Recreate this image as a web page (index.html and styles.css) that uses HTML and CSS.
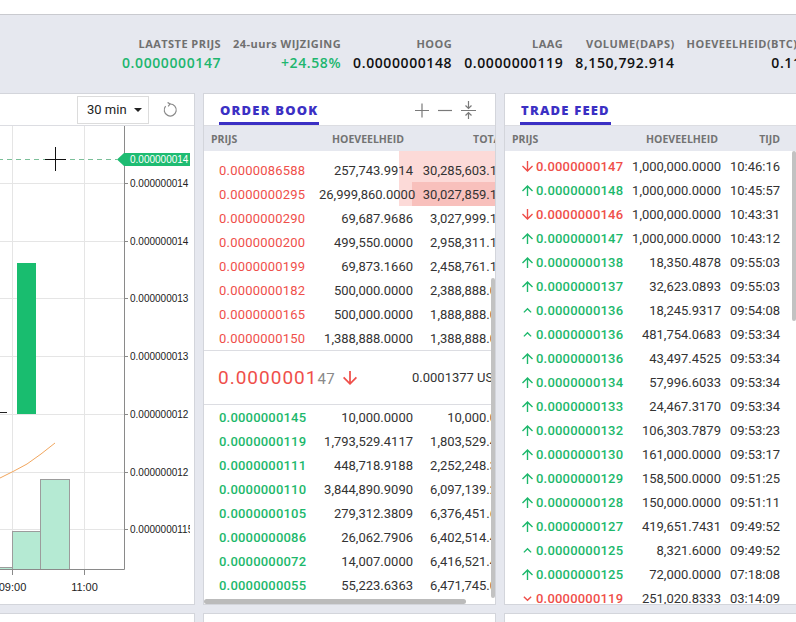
FILE: index.html
```html
<!DOCTYPE html>
<html>
<head>
   <meta charset="utf-8">
   <title>DAPS / BTC</title>
   <link rel="stylesheet" href="styles.css">
</head>
<body>
<div class="topbar"></div>

<!-- market stats -->
<div class="ticker">
   <div class="stat">
      <div class="stat-label">LAATSTE PRIJS</div>
      <div class="stat-value up">0.0000000147</div>
   </div>
   <div class="stat">
      <div class="stat-label">24-uurs WIJZIGING</div>
      <div class="stat-value up">+24.58%</div>
   </div>
   <div class="stat">
      <div class="stat-label">HOOG</div>
      <div class="stat-value">0.0000000148</div>
   </div>
   <div class="stat">
      <div class="stat-label">LAAG</div>
      <div class="stat-value">0.0000000119</div>
   </div>
   <div class="stat">
      <div class="stat-label">VOLUME(DAPS)</div>
      <div class="stat-value">8,150,792.914</div>
   </div>
   <div class="stat">
      <div class="stat-label">HOEVEELHEID(BTC)</div>
      <div class="stat-value">0.11002</div>
   </div>
</div>

<div class="panels">

   <!-- chart -->
   <section class="panel chart-panel">
      <div class="chart-toolbar">
         <div class="interval">30 min <span class="caret"></span></div>
         <svg width="16" height="16" viewBox="0 0 16 16" fill="none" stroke="#8a8a8a" stroke-width="1.2">
            <path d="M3.6 4.2 A6 6 0 1 0 8 2"/>
            <path d="M5.6 0.4 L8 2 L6.2 4.3"/>
         </svg>
      </div>
      <svg class="chart" width="205" height="478" viewBox="-11 126 205 478" font-family="Liberation Sans, Arial, sans-serif">
         <defs>
            <clipPath id="axisClip"><rect x="-11" y="126" width="201" height="478"/></clipPath>
         </defs>
         <g stroke="#e5e5e5" fill="none">
            <path d="M-11 183.5H124M-11 241.5H124M-11 298.5H124M-11 356.5H124M-11 414.5H124M-11 472.5H124M-11 529.5H124"/>
            <path d="M12.5 126V569M84.5 126V569"/>
         </g>
         <!-- volume -->
         <g fill="#b5ead3" stroke="#9c9c9c">
            <rect x="-12" y="567.5" width="24.5" height="2"/>
            <rect x="12.5" y="531.5" width="28" height="38"/>
            <rect x="40.5" y="479.5" width="29" height="90"/>
         </g>
         <!-- candles -->
         <rect x="17" y="263" width="19" height="151" fill="#19bd6f"/>
         <path d="M-11 412.5H7" stroke="#222"/>
         <polyline points="-11,484 0,478 14,471 27,464 41,454 55,443" fill="none" stroke="#f1a65e"/>
         <!-- axes -->
         <g stroke="#8a8a8a" fill="none">
            <path d="M124.5 126V569.5M-11 569.5H124.5"/>
            <path d="M124 183.5h4M124 241.5h4M124 298.5h4M124 356.5h4M124 414.5h4M124 472.5h4M124 529.5h4"/>
            <path d="M12.5 570v5M84.5 570v5"/>
         </g>
         <g font-size="10" fill="#222" clip-path="url(#axisClip)">
            <text x="130" y="187">0.000000014</text>
            <text x="130" y="245">0.000000014</text>
            <text x="130" y="302">0.000000013</text>
            <text x="130" y="360">0.000000013</text>
            <text x="130" y="418">0.000000012</text>
            <text x="130" y="476">0.000000012</text>
            <text x="130" y="533">0.0000000115</text>
         </g>
         <g font-size="11" fill="#222" text-anchor="middle">
            <text x="12.5" y="591">09:00</text>
            <text x="84.5" y="591">11:00</text>
         </g>
         <!-- last price marker -->
         <path d="M-11 159.5H117" stroke="#7bbf99" stroke-dasharray="5 4"/>
         <path d="M117 159.5L124 153H190V166H124Z" fill="#1ebc72"/>
         <text x="130" y="163" font-size="10" fill="#fff">0.000000014</text>
         <path d="M45 159.5H66M55.5 147V171" stroke="#111"/>
      </svg>
   </section>

   <!-- order book -->
   <section class="panel book">
      <div class="panel-head">
         <div class="tab">ORDER BOOK</div>
         <div class="tools">
            <svg width="14" height="16" viewBox="0 0 14 16" stroke="#7a7a7a" stroke-width="1.2"><path d="M0 8.5H14M7 1.5V15.5"/></svg>
            <svg width="14" height="16" viewBox="0 0 14 16" stroke="#7a7a7a" stroke-width="1.2"><path d="M0 8.5H14"/></svg>
            <svg width="15" height="18" viewBox="0 0 15 18" fill="none" stroke="#7a7a7a" stroke-width="1.2"><path d="M0 9.5H15M7.5 0V7M4.5 4.5l3 3 3-3M7.5 18V12M4.5 14.5l3-3 3 3"/></svg>
         </div>
      </div>
      <div class="cols book-cols">
         <span class="c-price">PRIJS</span>
         <span class="c-amount">HOEVEELHEID</span>
         <span class="c-total">TOTAAL</span>
      </div>
      <div class="asks">
         <div class="book-spacer"></div>
         <div class="book-row depth-1"><span class="price down">0.0000086588</span><span class="amount">257,743.9914</span><span class="total">30,285,603.1260</span></div>
         <div class="book-row depth-2"><span class="price down">0.0000000295</span><span class="amount">26,999,860.0000</span><span class="total">30,027,859.1346</span></div>
         <div class="book-row"><span class="price down">0.0000000290</span><span class="amount">69,687.9686</span><span class="total">3,027,999.1346</span></div>
         <div class="book-row"><span class="price down">0.0000000200</span><span class="amount">499,550.0000</span><span class="total">2,958,311.1660</span></div>
         <div class="book-row"><span class="price down">0.0000000199</span><span class="amount">69,873.1660</span><span class="total">2,458,761.1660</span></div>
         <div class="book-row"><span class="price down">0.0000000182</span><span class="amount">500,000.0000</span><span class="total">2,388,888.0000</span></div>
         <div class="book-row"><span class="price down">0.0000000165</span><span class="amount">500,000.0000</span><span class="total">1,888,888.0000</span></div>
         <div class="book-row"><span class="price down">0.0000000150</span><span class="amount">1,388,888.0000</span><span class="total">1,388,888.0000</span></div>
      </div>
      <div class="book-mid">
         <div class="mid-left">
            <span class="last">0.0000001<small>47</small></span>
            <svg class="mid-arrow" width="14" height="14" viewBox="4 4 16 16" fill="#ef4f4a"><path d="M20 12l-1.41-1.41L13 16.17V4h-2v12.17l-5.58-5.59L4 12l8 8 8-8z"/></svg>
         </div>
         <span class="usd">0.0001377 USD</span>
      </div>
      <div class="bids">
         <div class="book-row"><span class="price up">0.0000000145</span><span class="amount">10,000.0000</span><span class="total">10,000.0000</span></div>
         <div class="book-row"><span class="price up">0.0000000119</span><span class="amount">1,793,529.4117</span><span class="total">1,803,529.4117</span></div>
         <div class="book-row"><span class="price up">0.0000000111</span><span class="amount">448,718.9188</span><span class="total">2,252,248.3305</span></div>
         <div class="book-row"><span class="price up">0.0000000110</span><span class="amount">3,844,890.9090</span><span class="total">6,097,139.2395</span></div>
         <div class="book-row"><span class="price up">0.0000000105</span><span class="amount">279,312.3809</span><span class="total">6,376,451.6204</span></div>
         <div class="book-row"><span class="price up">0.0000000086</span><span class="amount">26,062.7906</span><span class="total">6,402,514.4110</span></div>
         <div class="book-row"><span class="price up">0.0000000072</span><span class="amount">14,007.0000</span><span class="total">6,416,521.4110</span></div>
         <div class="book-row"><span class="price up">0.0000000055</span><span class="amount">55,223.6363</span><span class="total">6,471,745.0473</span></div>
      </div>
      <div class="vscroll"></div>
      <div class="hscroll"></div>
   </section>

   <!-- trade feed -->
   <section class="panel feed">
      <div class="panel-head">
         <div class="tab">TRADE FEED</div>
      </div>
      <div class="cols feed-cols">
         <span class="c-price">PRIJS</span>
         <span class="c-amount">HOEVEELHEID</span>
         <span class="c-time">TIJD</span>
      </div>
      <div class="feed-list">
         <div class="feed-row"><span class="dir"><svg width="11" height="11" viewBox="4 4 16 16" fill="#ef4f4a"><path d="M20 12l-1.41-1.41L13 16.17V4h-2v12.17l-5.58-5.59L4 12l8 8 8-8z"/></svg></span><span class="price down">0.0000000147</span><span class="amount">1,000,000.0000</span><span class="time">10:46:16</span></div>
         <div class="feed-row"><span class="dir"><svg width="11" height="11" viewBox="4 4 16 16" fill="#1db86c"><path d="M4 12l1.41 1.41L11 7.83V20h2V7.83l5.58 5.59L20 12l-8-8-8 8z"/></svg></span><span class="price up">0.0000000148</span><span class="amount">1,000,000.0000</span><span class="time">10:45:57</span></div>
         <div class="feed-row"><span class="dir"><svg width="11" height="11" viewBox="4 4 16 16" fill="#ef4f4a"><path d="M20 12l-1.41-1.41L13 16.17V4h-2v12.17l-5.58-5.59L4 12l8 8 8-8z"/></svg></span><span class="price down">0.0000000146</span><span class="amount">1,000,000.0000</span><span class="time">10:43:31</span></div>
         <div class="feed-row"><span class="dir"><svg width="11" height="11" viewBox="4 4 16 16" fill="#1db86c"><path d="M4 12l1.41 1.41L11 7.83V20h2V7.83l5.58 5.59L20 12l-8-8-8 8z"/></svg></span><span class="price up">0.0000000147</span><span class="amount">1,000,000.0000</span><span class="time">10:43:12</span></div>
         <div class="feed-row"><span class="dir"><svg width="11" height="11" viewBox="4 4 16 16" fill="#1db86c"><path d="M4 12l1.41 1.41L11 7.83V20h2V7.83l5.58 5.59L20 12l-8-8-8 8z"/></svg></span><span class="price up">0.0000000138</span><span class="amount">18,350.4878</span><span class="time">09:55:03</span></div>
         <div class="feed-row"><span class="dir"><svg width="11" height="11" viewBox="4 4 16 16" fill="#1db86c"><path d="M4 12l1.41 1.41L11 7.83V20h2V7.83l5.58 5.59L20 12l-8-8-8 8z"/></svg></span><span class="price up">0.0000000137</span><span class="amount">32,623.0893</span><span class="time">09:55:03</span></div>
         <div class="feed-row"><span class="dir"><svg width="11" height="11" viewBox="4 4 16 16" fill="#1db86c"><path d="M12 8l-6 6 1.41 1.41L12 10.83l4.59 4.58L18 14z"/></svg></span><span class="price up">0.0000000136</span><span class="amount">18,245.9317</span><span class="time">09:54:08</span></div>
         <div class="feed-row"><span class="dir"><svg width="11" height="11" viewBox="4 4 16 16" fill="#1db86c"><path d="M12 8l-6 6 1.41 1.41L12 10.83l4.59 4.58L18 14z"/></svg></span><span class="price up">0.0000000136</span><span class="amount">481,754.0683</span><span class="time">09:53:34</span></div>
         <div class="feed-row"><span class="dir"><svg width="11" height="11" viewBox="4 4 16 16" fill="#1db86c"><path d="M4 12l1.41 1.41L11 7.83V20h2V7.83l5.58 5.59L20 12l-8-8-8 8z"/></svg></span><span class="price up">0.0000000136</span><span class="amount">43,497.4525</span><span class="time">09:53:34</span></div>
         <div class="feed-row"><span class="dir"><svg width="11" height="11" viewBox="4 4 16 16" fill="#1db86c"><path d="M4 12l1.41 1.41L11 7.83V20h2V7.83l5.58 5.59L20 12l-8-8-8 8z"/></svg></span><span class="price up">0.0000000134</span><span class="amount">57,996.6033</span><span class="time">09:53:34</span></div>
         <div class="feed-row"><span class="dir"><svg width="11" height="11" viewBox="4 4 16 16" fill="#1db86c"><path d="M4 12l1.41 1.41L11 7.83V20h2V7.83l5.58 5.59L20 12l-8-8-8 8z"/></svg></span><span class="price up">0.0000000133</span><span class="amount">24,467.3170</span><span class="time">09:53:34</span></div>
         <div class="feed-row"><span class="dir"><svg width="11" height="11" viewBox="4 4 16 16" fill="#1db86c"><path d="M4 12l1.41 1.41L11 7.83V20h2V7.83l5.58 5.59L20 12l-8-8-8 8z"/></svg></span><span class="price up">0.0000000132</span><span class="amount">106,303.7879</span><span class="time">09:53:23</span></div>
         <div class="feed-row"><span class="dir"><svg width="11" height="11" viewBox="4 4 16 16" fill="#1db86c"><path d="M4 12l1.41 1.41L11 7.83V20h2V7.83l5.58 5.59L20 12l-8-8-8 8z"/></svg></span><span class="price up">0.0000000130</span><span class="amount">161,000.0000</span><span class="time">09:53:17</span></div>
         <div class="feed-row"><span class="dir"><svg width="11" height="11" viewBox="4 4 16 16" fill="#1db86c"><path d="M4 12l1.41 1.41L11 7.83V20h2V7.83l5.58 5.59L20 12l-8-8-8 8z"/></svg></span><span class="price up">0.0000000129</span><span class="amount">158,500.0000</span><span class="time">09:51:25</span></div>
         <div class="feed-row"><span class="dir"><svg width="11" height="11" viewBox="4 4 16 16" fill="#1db86c"><path d="M4 12l1.41 1.41L11 7.83V20h2V7.83l5.58 5.59L20 12l-8-8-8 8z"/></svg></span><span class="price up">0.0000000128</span><span class="amount">150,000.0000</span><span class="time">09:51:11</span></div>
         <div class="feed-row"><span class="dir"><svg width="11" height="11" viewBox="4 4 16 16" fill="#1db86c"><path d="M4 12l1.41 1.41L11 7.83V20h2V7.83l5.58 5.59L20 12l-8-8-8 8z"/></svg></span><span class="price up">0.0000000127</span><span class="amount">419,651.7431</span><span class="time">09:49:52</span></div>
         <div class="feed-row"><span class="dir"><svg width="11" height="11" viewBox="4 4 16 16" fill="#1db86c"><path d="M12 8l-6 6 1.41 1.41L12 10.83l4.59 4.58L18 14z"/></svg></span><span class="price up">0.0000000125</span><span class="amount">8,321.6000</span><span class="time">09:49:52</span></div>
         <div class="feed-row"><span class="dir"><svg width="11" height="11" viewBox="4 4 16 16" fill="#1db86c"><path d="M4 12l1.41 1.41L11 7.83V20h2V7.83l5.58 5.59L20 12l-8-8-8 8z"/></svg></span><span class="price up">0.0000000125</span><span class="amount">72,000.0000</span><span class="time">07:18:08</span></div>
         <div class="feed-row"><span class="dir"><svg width="11" height="11" viewBox="4 4 16 16" fill="#ef4f4a"><path d="M16.59 8.59L12 13.17 7.41 8.59 6 10l6 6 6-6z"/></svg></span><span class="price down">0.0000000119</span><span class="amount">251,020.8333</span><span class="time">03:14:09</span></div>
      </div>
      <div class="vscroll"></div>
   </section>
</div>

<div class="panels lower">
   <section class="panel chart-panel"></section>
   <section class="panel"></section>
   <section class="panel"></section>
</div>
</body>
</html>
```

FILE: styles.css
```css
* {
   box-sizing: border-box;
}
html, body {
   margin: 0;
   padding: 0;
}
body {
   width: 796px;
   height: 622px;
   overflow: hidden;
   background-color: #e6e8ef;
   font-family: "Open Sans", Arial, sans-serif;
   color: #222;
}

/* white strip above the ticker */
.topbar {
   height: 15px;
   background-color: #fff;
   border-bottom: 1px solid #c9cacf;
}

/* market stats */
.ticker {
   display: flex;
   gap: 12px;
   height: 78px;
   padding: 22px 0 0 122px;
   white-space: nowrap;
}
.stat {
   text-align: right;
}
.stat-label {
   font-size: 11px;
   font-weight: 700;
   line-height: 14px;
   letter-spacing: 0.45px;
   color: #707070;
}
.stat-value {
   margin-top: 2px;
   font-size: 14px;
   font-weight: 600;
   line-height: 20px;
   letter-spacing: 0.6px;
   color: #111;
}
.stat-value.up {
   color: #20b66e;
}
.stat:last-child .stat-value {
   margin-right: -30px;
}

/* panel grid */
.panels {
   display: flex;
   gap: 8px;
   height: 512px;
   margin-left: -12px;
}
.panels.lower {
   height: 100px;
   margin-top: 8px;
}
.panel {
   position: relative;
   flex: none;
   width: 293px;
   background-color: #fff;
   border: 1px solid #d3d5db;
   overflow: hidden;
}
.panel.chart-panel {
   width: 207px;
}

/* chart */
.chart-toolbar {
   display: flex;
   align-items: center;
   justify-content: flex-end;
   gap: 13px;
   height: 32px;
   padding-right: 16px;
   border-bottom: 1px solid #dcdde2;
}
.interval {
   display: flex;
   align-items: center;
   gap: 7px;
   width: 72px;
   height: 28px;
   padding-left: 9px;
   border: 1px solid #dcdcdc;
   font-family: Roboto, sans-serif;
   font-size: 13px;
   color: #222;
}
.caret {
   border-left: 4px solid transparent;
   border-right: 4px solid transparent;
   border-top: 4px solid #222;
   margin-top: 1px;
}
.chart {
   display: block;
}

/* panel header with tab */
.panel-head {
   display: flex;
   align-items: stretch;
   height: 32px;
   padding: 0 19px 0 15px;
   border-bottom: 1px solid #dcdde2;
}
.tab {
   display: flex;
   align-items: center;
   padding: 3px 1px 0;
   border-bottom: 3px solid #3b30c4;
   font-size: 13px;
   font-weight: 800;
   letter-spacing: 1.2px;
   color: #3b30c4;
}
.tools {
   display: flex;
   align-items: center;
   gap: 9px;
   margin-left: auto;
}
.tools svg {
   display: block;
}

/* column headers */
.cols {
   display: flex;
   align-items: center;
   height: 25px;
   padding-left: 7px;
   background-color: #e6e8ef;
   font-size: 10.5px;
   font-weight: 700;
   color: #737373;
   white-space: nowrap;
}
.cols span {
   flex: none;
}
.book-cols .c-price { width: 115px; }
.book-cols .c-amount { width: 78px; text-align: right; }
.book-cols .c-total { width: 110px; text-align: right; }
.feed-cols .c-price { width: 121px; }
.feed-cols .c-amount { width: 85px; text-align: right; }
.feed-cols .c-time { width: 62px; text-align: right; }

/* order book */
.book-spacer {
   height: 7px;
   background: linear-gradient(to right, transparent 195px, #fcdad8 195px);
}
.book-row {
   display: flex;
   align-items: center;
   height: 24px;
   padding-left: 15px;
   font-family: Roboto, sans-serif;
   font-size: 13px;
   color: #333;
   white-space: nowrap;
}
.book-row span {
   flex: none;
}
.book-row .price {
   width: 100px;
   letter-spacing: 0.2px;
}
.book-row .amount {
   width: 94px;
   text-align: right;
}
.book-row .total {
   width: 106px;
   text-align: right;
}
.book-row.depth-1 {
   background: linear-gradient(to right, transparent 195px, #fcdad8 195px);
}
.book-row.depth-2 {
   background: linear-gradient(to right, transparent 195px, #fcdad8 195px, #fcdad8 208px, #f8c0bc 208px);
}
.price.down {
   color: #ef4f4a;
}
.price.up {
   color: #1db86c;
   font-weight: 500;
}

.book-mid {
   display: flex;
   align-items: center;
   height: 55px;
   padding-left: 14px;
   border-top: 1px solid #dcdde2;
   border-bottom: 1px solid #dcdde2;
   font-family: Roboto, sans-serif;
   white-space: nowrap;
}
.mid-left {
   display: flex;
   align-items: center;
   flex: none;
   width: 194px;
}
.last {
   font-size: 19px;
   letter-spacing: 1px;
   color: #ef4f4a;
}
.last small {
   font-size: 15px;
   letter-spacing: 0.5px;
   color: #8a8a8a;
}
.mid-arrow {
   margin-left: 8px;
}
.usd {
   font-size: 13px;
   color: #333;
}

/* trade feed */
.feed-list {
   padding-top: 3px;
}
.feed-row {
   display: flex;
   align-items: center;
   height: 24px;
   padding-left: 13px;
   font-family: Roboto, sans-serif;
   font-size: 13px;
   color: #333;
   white-space: nowrap;
}
.feed-row span {
   flex: none;
}
.feed-row .dir {
   display: flex;
   justify-content: center;
   width: 18px;
}
.feed-row .price {
   width: 88px;
   font-weight: 500;
   letter-spacing: 0.2px;
}
.feed-row .amount {
   width: 97px;
   text-align: right;
}
.feed-row .time {
   margin-left: 9px;
}

/* scrollbars drawn over the lists */
.vscroll {
   position: absolute;
   right: 0;
   width: 4px;
   border-radius: 2px;
   background-color: #c2c2c2;
}
.book .vscroll {
   top: 184px;
   height: 320px;
}
.feed .vscroll {
   top: 57px;
   height: 170px;
}
.hscroll {
   position: absolute;
   left: 0;
   bottom: 0;
   width: 262px;
   height: 5px;
   border-radius: 3px;
   background-color: #bbb;
}
```
